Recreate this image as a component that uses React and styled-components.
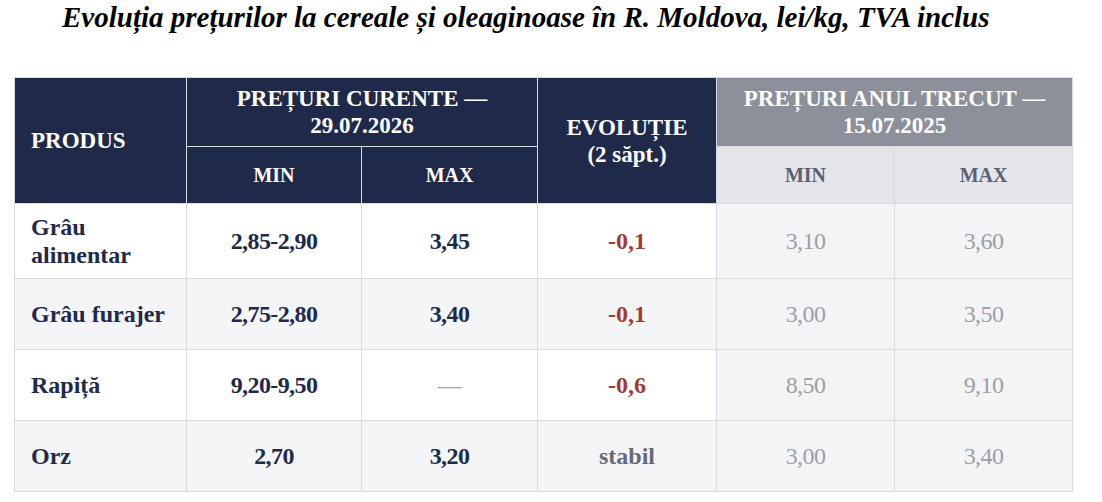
import React from 'react';
import styled, { createGlobalStyle } from 'styled-components';

const GlobalStyle = createGlobalStyle`
  html, body {
    margin: 0;
    padding: 0;
    background: #ffffff;
  }
  body {
    font-family: 'Liberation Serif', 'Times New Roman', serif;
  }
`;

const rows = [
  { name: 'Grâu alimentar', min: '2,85-2,90', max: '3,45', evo: '-0,1', trend: 'down', lastMin: '3,10', lastMax: '3,60' },
  { name: 'Grâu furajer', min: '2,75-2,80', max: '3,40', evo: '-0,1', trend: 'down', lastMin: '3,00', lastMax: '3,50' },
  { name: 'Rapiță', min: '9,20-9,50', max: null, evo: '-0,6', trend: 'down', lastMin: '8,50', lastMax: '9,10' },
  { name: 'Orz', min: '2,70', max: '3,20', evo: 'stabil', trend: 'flat', lastMin: '3,00', lastMax: '3,40' },
];

const Page = styled.div`
  padding: 0 30px 12px 14px;
`;

const Title = styled.h1`
  margin: 0;
  padding: 1px 0 0 48px;
  height: 77px;
  box-sizing: border-box;
  font-family: 'Liberation Serif', 'Times New Roman', serif;
  font-style: italic;
  font-weight: 700;
  font-size: 29px;
  line-height: 32px;
  color: #000;
  white-space: nowrap;
`;

const Table = styled.table`
  width: 1058px;
  border-collapse: collapse;
  table-layout: fixed;
  font-family: 'Liberation Serif', 'Times New Roman', serif;
`;

const Head = styled.th`
  border: 1px solid #d9dbe0;
  font-weight: 700;
  text-align: ${(p) => (p.$left ? 'left' : 'center')};
  padding: ${(p) => (p.$left ? '0 0 0 16px' : '0 8px')};
  font-size: ${(p) => (p.$small ? '20px' : '23px')};
  line-height: 27px;
  background: ${(p) =>
    p.$tone === 'grey' ? '#8b909b' : p.$tone === 'light' ? '#e4e5e9' : '#1f2a4a'};
  color: ${(p) => (p.$tone === 'light' ? '#5b6170' : '#ffffff')};
  vertical-align: middle;
`;

const Row = styled.tr`
  height: 71px;
  background: ${(p) => (p.$striped ? '#f4f5f7' : '#ffffff')};
`;

const Cell = styled.td`
  border: 1px solid #d9dbe0;
  text-align: ${(p) => (p.$left ? 'left' : 'center')};
  padding: ${(p) => (p.$left ? '9px 8px 9px 16px' : '9px 8px')};
  font-size: 24px;
  line-height: 28px;
  font-weight: 700;
  letter-spacing: ${(p) => (p.$left ? '0' : '-0.6px')};
  color: #1f2a4a;
  vertical-align: middle;
`;

const EvoCell = styled(Cell)`
  color: ${(p) => (p.$trend === 'down' ? '#a23b34' : '#646a77')};
  letter-spacing: 0;
`;

const LastCell = styled(Cell)`
  background: #f3f4f6;
  font-weight: 400;
  color: #9aa0a9;
`;

const Dash = styled.span`
  color: #9ca1aa;
  font-weight: 400;
`;

export default function App() {
  return (
    <>
      <GlobalStyle />
      <Page>
        <Title>Evoluția prețurilor la cereale și oleaginoase în R. Moldova, lei/kg, TVA inclus</Title>
        <Table>
          <colgroup>
            <col style={{ width: 172 }} />
            <col style={{ width: 175 }} />
            <col style={{ width: 176 }} />
            <col style={{ width: 179 }} />
            <col style={{ width: 178 }} />
            <col style={{ width: 178 }} />
          </colgroup>
          <thead>
            <tr style={{ height: 69 }}>
              <Head rowSpan={2} $left>PRODUS</Head>
              <Head colSpan={2}>PREȚURI CURENTE —<br />29.07.2026</Head>
              <Head rowSpan={2}>EVOLUȚIE<br />(2 săpt.)</Head>
              <Head colSpan={2} $tone="grey">PREȚURI ANUL TRECUT —<br />15.07.2025</Head>
            </tr>
            <tr style={{ height: 57 }}>
              <Head $small>MIN</Head>
              <Head $small>MAX</Head>
              <Head $small $tone="light">MIN</Head>
              <Head $small $tone="light">MAX</Head>
            </tr>
          </thead>
          <tbody>
            {rows.map((r, i) => (
              <Row key={r.name} $striped={i % 2 === 1}>
                <Cell $left>{r.name}</Cell>
                <Cell>{r.min}</Cell>
                <Cell>{r.max ?? <Dash>—</Dash>}</Cell>
                <EvoCell $trend={r.trend}>{r.evo}</EvoCell>
                <LastCell>{r.lastMin}</LastCell>
                <LastCell>{r.lastMax}</LastCell>
              </Row>
            ))}
          </tbody>
        </Table>
      </Page>
    </>
  );
}
